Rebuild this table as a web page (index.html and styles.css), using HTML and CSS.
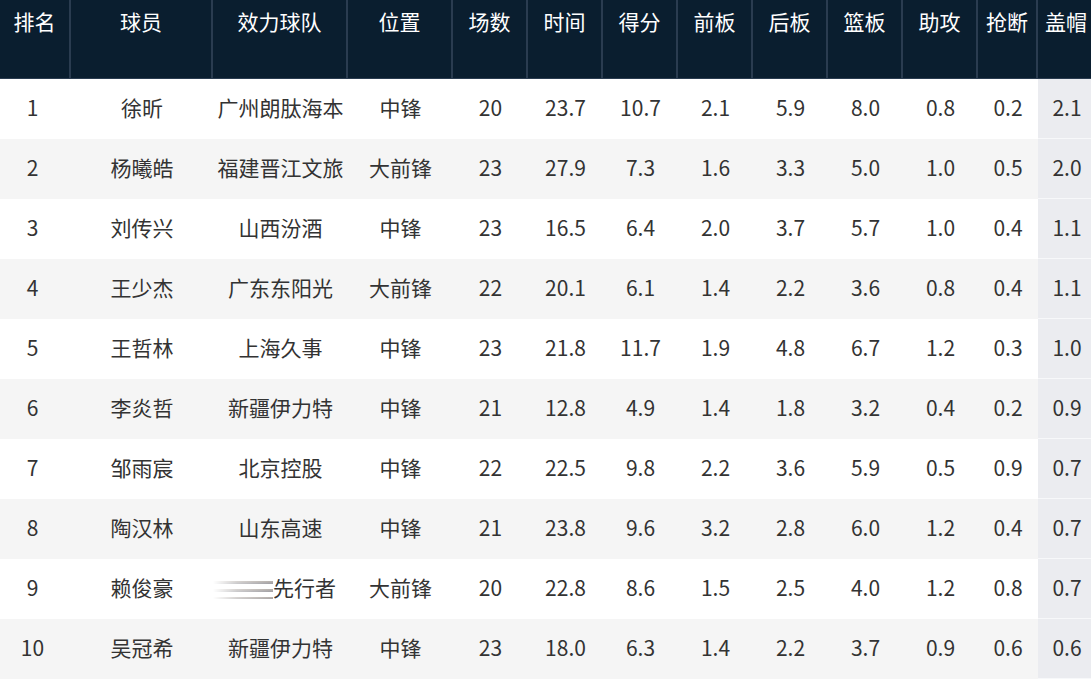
FILE: index.html
```html
<!DOCTYPE html>
<html lang="zh-CN">
<head>
<meta charset="utf-8">
<title>球员数据</title>
<link rel="stylesheet" href="styles.css">
</head>
<body>
<table class="stats">
  <colgroup>
    <col class="c-rank"><col class="c-player"><col class="c-team"><col class="c-pos">
    <col class="c-num"><col class="c-num"><col class="c-num"><col class="c-num"><col class="c-num"><col class="c-num"><col class="c-num">
    <col class="c-stl"><col class="c-blk">
  </colgroup>
  <thead>
    <tr>
      <th>排名</th><th>球员</th><th>效力球队</th><th>位置</th><th>场数</th><th>时间</th><th>得分</th><th>前板</th><th>后板</th><th>篮板</th><th>助攻</th><th>抢断</th><th class="sorted">盖帽</th>
    </tr>
  </thead>
  <tbody>
    <tr><td class="rank">1</td><td>徐昕</td><td>广州朗肽海本</td><td>中锋</td><td>20</td><td>23.7</td><td>10.7</td><td>2.1</td><td>5.9</td><td>8.0</td><td>0.8</td><td>0.2</td><td class="sorted">2.1</td></tr>
    <tr><td class="rank">2</td><td>杨曦皓</td><td>福建晋江文旅</td><td>大前锋</td><td>23</td><td>27.9</td><td>7.3</td><td>1.6</td><td>3.3</td><td>5.0</td><td>1.0</td><td>0.5</td><td class="sorted">2.0</td></tr>
    <tr><td class="rank">3</td><td>刘传兴</td><td>山西汾酒</td><td>中锋</td><td>23</td><td>16.5</td><td>6.4</td><td>2.0</td><td>3.7</td><td>5.7</td><td>1.0</td><td>0.4</td><td class="sorted">1.1</td></tr>
    <tr><td class="rank">4</td><td>王少杰</td><td>广东东阳光</td><td>大前锋</td><td>22</td><td>20.1</td><td>6.1</td><td>1.4</td><td>2.2</td><td>3.6</td><td>0.8</td><td>0.4</td><td class="sorted">1.1</td></tr>
    <tr><td class="rank">5</td><td>王哲林</td><td>上海久事</td><td>中锋</td><td>23</td><td>21.8</td><td>11.7</td><td>1.9</td><td>4.8</td><td>6.7</td><td>1.2</td><td>0.3</td><td class="sorted">1.0</td></tr>
    <tr><td class="rank">6</td><td>李炎哲</td><td>新疆伊力特</td><td>中锋</td><td>21</td><td>12.8</td><td>4.9</td><td>1.4</td><td>1.8</td><td>3.2</td><td>0.4</td><td>0.2</td><td class="sorted">0.9</td></tr>
    <tr><td class="rank">7</td><td>邹雨宸</td><td>北京控股</td><td>中锋</td><td>22</td><td>22.5</td><td>9.8</td><td>2.2</td><td>3.6</td><td>5.9</td><td>0.5</td><td>0.9</td><td class="sorted">0.7</td></tr>
    <tr><td class="rank">8</td><td>陶汉林</td><td>山东高速</td><td>中锋</td><td>21</td><td>23.8</td><td>9.6</td><td>3.2</td><td>2.8</td><td>6.0</td><td>1.2</td><td>0.4</td><td class="sorted">0.7</td></tr>
    <tr><td class="rank">9</td><td>赖俊豪</td><td><span class="smear" aria-hidden="true"></span><span class="smear-text">先行者</span></td><td>大前锋</td><td>20</td><td>22.8</td><td>8.6</td><td>1.5</td><td>2.5</td><td>4.0</td><td>1.2</td><td>0.8</td><td class="sorted">0.7</td></tr>
    <tr><td class="rank">10</td><td>吴冠希</td><td>新疆伊力特</td><td>中锋</td><td>23</td><td>18.0</td><td>6.3</td><td>1.4</td><td>2.2</td><td>3.7</td><td>0.9</td><td>0.6</td><td class="sorted">0.6</td></tr>
  </tbody>
</table>
</body>
</html>
```

FILE: styles.css
```css
html, body {
  margin: 0;
  padding: 0;
  background: #ffffff;
  overflow: hidden;
}

.stats {
  table-layout: fixed;
  width: 1096px;
  border-collapse: separate;
  border-spacing: 0;
  font-family: "Noto Sans CJK SC", "Microsoft YaHei", sans-serif;
  font-size: 21px;
  color: #333333;
}

.c-rank { width: 71px; }
.c-player { width: 142px; }
.c-team { width: 135px; }
.c-pos { width: 105px; }
.c-num { width: 75px; }
.c-stl { width: 60px; }
.c-blk { width: 58px; }

.stats th {
  height: 72px;
  padding: 6px 0 0;
  vertical-align: top;
  background: #0a1e2f;
  color: #ffffff;
  font-weight: normal;
  line-height: 30px;
  text-align: center;
  white-space: nowrap;
  border-right: 2px solid #2a3c50;
  border-bottom: 1px solid #2a3c50;
}

.stats td {
  height: 56px;
  padding: 0 0 3px;
  text-align: center;
  vertical-align: middle;
  line-height: 30px;
  white-space: nowrap;
  border-bottom: 1px solid transparent;
}

.stats td.rank {
  padding-right: 6px;
}

.stats tbody tr:nth-child(even) td {
  background: #f5f5f5;
}

.stats td.sorted,
.stats tbody tr:nth-child(even) td.sorted {
  background: #ebecf0;
  border-bottom-color: #f7f8fa;
}

.smear {
  display: inline-block;
  width: 60px;
  height: 20px;
  vertical-align: -3px;
  background: repeating-linear-gradient(to bottom,
    transparent 0, transparent 2px,
    #b9b2ac 2px, #9c9ca2 5px,
    transparent 5px, transparent 8px);
  -webkit-mask-image: linear-gradient(to right, transparent 0, rgba(0,0,0,0.55) 40%, #000 100%);
  mask-image: linear-gradient(to right, transparent 0, rgba(0,0,0,0.55) 40%, #000 100%);
}

.smear-text {
  padding-right: 12px;
}
```
